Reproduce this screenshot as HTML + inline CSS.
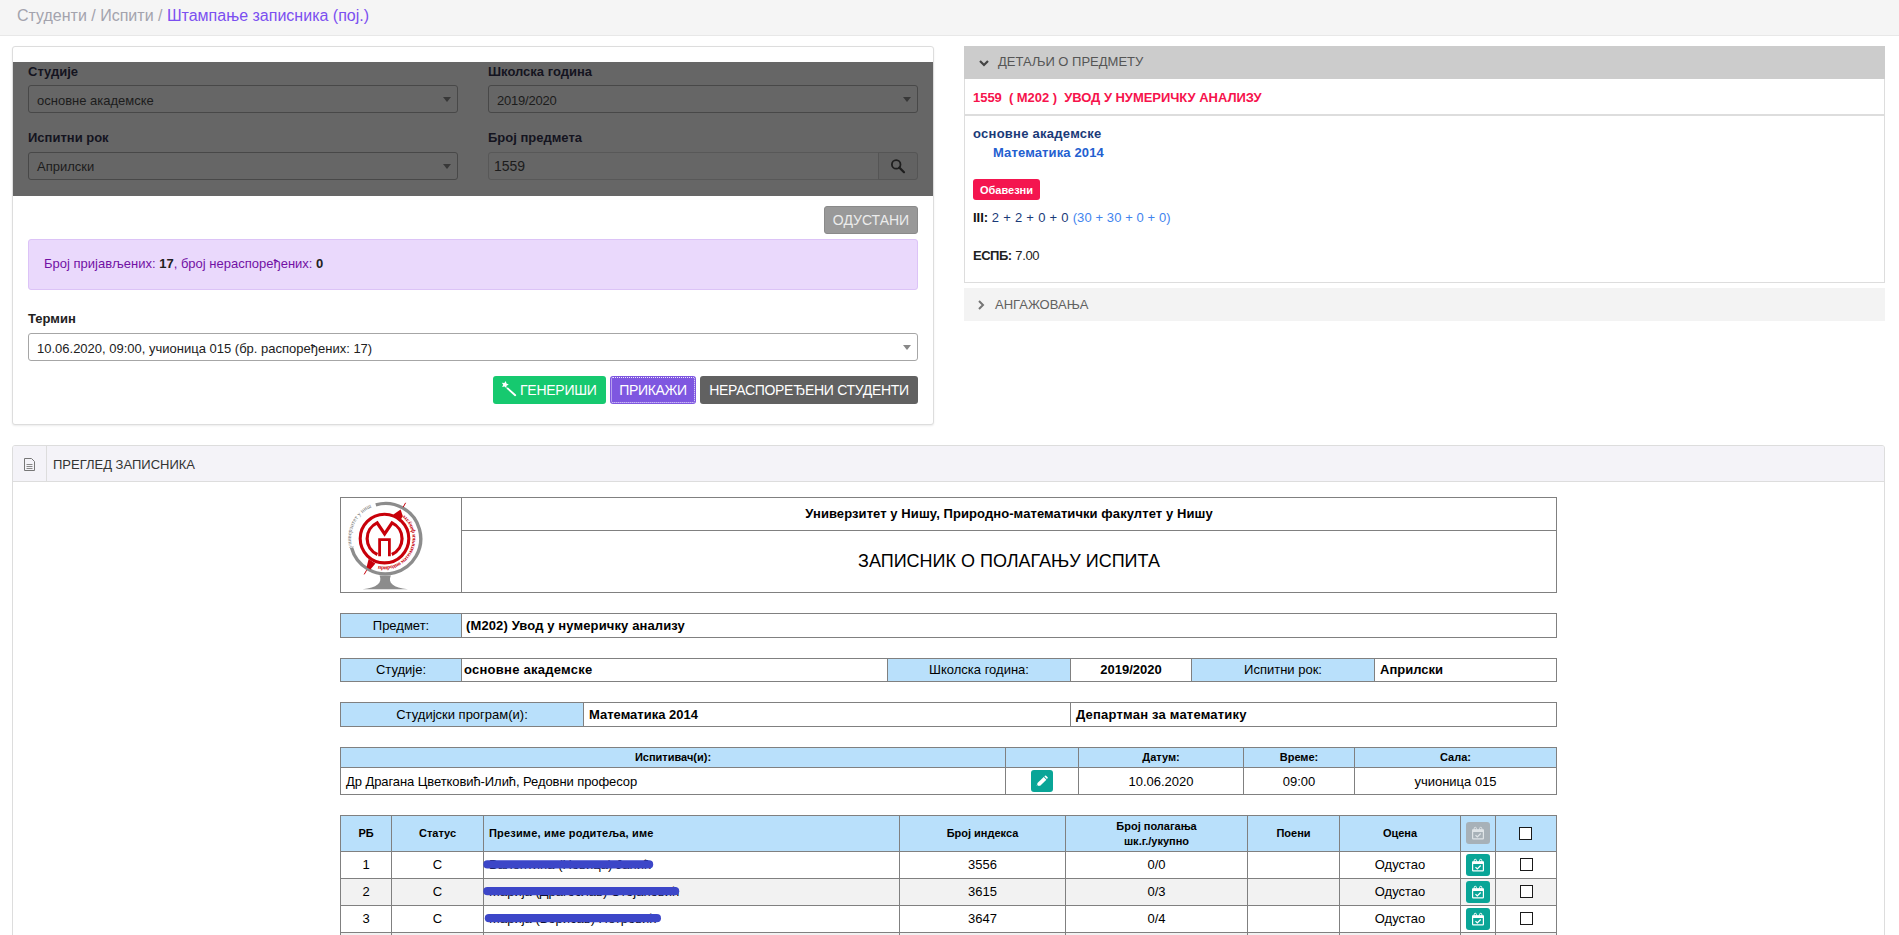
<!DOCTYPE html>
<html lang="sr">
<head>
<meta charset="utf-8">
<title>Штампање записника</title>
<style>
*{box-sizing:border-box;margin:0;padding:0}
html,body{width:1899px;height:935px;overflow:hidden;background:#fff}
body{font-family:"Liberation Sans",sans-serif;font-size:13px;color:#212121;position:relative}
.abs{position:absolute}
#crumb{left:0;top:0;width:1899px;height:36px;background:#f5f5f5;border-bottom:1px solid #e8e8e8}
#crumb span{position:absolute;left:17px;top:7px;font-size:16px;color:#a3a3ad;white-space:nowrap}
#crumb span b{font-weight:normal;color:#7b4ff0}
/* left panel */
#lp{left:12px;top:46px;width:922px;height:379px;border:1px solid #ddd;border-radius:3px;background:#fff;box-shadow:0 1px 2px rgba(0,0,0,.08)}
#ov{left:13px;top:62px;width:920px;height:134px;background:#666}
.lbl{font-weight:bold;font-size:13px;color:#212121;white-space:nowrap}
.sel{height:28px;border:1px solid #a6a6a6;border-radius:3px;background:#fff;font-size:13px;color:#212121;padding:7px 0 0 8px;white-space:nowrap}
.sel i{position:absolute;right:6px;top:11px;width:0;height:0;border-left:4px solid transparent;border-right:4px solid transparent;border-top:5px solid #888}
.dk{background:#666;border-color:#484848;color:#1c1c1c}
.dk i{border-top-color:#383838}
.btn{height:28px;border-radius:3px;color:#fff;font-size:14px;text-align:center;padding-top:6px;white-space:nowrap}

#bp{left:12px;top:445px;width:1873px;height:520px;border:1px solid #ddd;border-radius:3px;background:#fff}
#bph{left:13px;top:446px;width:1871px;height:36px;background:#f4f3f8;border-bottom:1px solid #ddd;border-radius:2px 2px 0 0}
table.t{position:absolute;left:340px;width:1217px;border-collapse:collapse;table-layout:fixed;font-size:13px;color:#000}
table.t td{border:1px solid #808080;padding:0;white-space:nowrap;overflow:hidden;vertical-align:middle}
td.h{background:#b9e0fb;text-align:center}
td.b{font-weight:bold}
td.c{text-align:center}
tr.alt td{background:#f2f2f2}
.ib{display:block;margin:0 auto;width:24px;height:22px;border-radius:3px;background:#09a597}
.cb{display:block;margin:0 auto;width:13px;height:13px;border:1px solid #1a1a1a;background:#fff;border-radius:0}
table.t td.u,table.t tr.u td{padding-bottom:1px}
</style>
</head>
<body>
<div id="crumb" class="abs"><span>Студенти / Испити / <b>Штампање записника (пој.)</b></span></div>

<div id="lp" class="abs"></div>
<div id="ov" class="abs"></div>
<div class="abs lbl" style="left:28px;top:64px;color:#14141f">Студије</div>
<div class="abs lbl" style="left:488px;top:64px;color:#14141f">Школска година</div>
<div class="abs sel dk" style="left:28px;top:85px;width:430px">основне академске<i></i></div>
<div class="abs sel dk" style="left:488px;top:85px;width:430px;letter-spacing:-.2px">2019/2020<i></i></div>
<div class="abs lbl" style="left:28px;top:130px;color:#14141f">Испитни рок</div>
<div class="abs lbl" style="left:488px;top:130px;color:#14141f">Број предмета</div>
<div class="abs sel dk" style="left:28px;top:152px;width:430px;padding-top:6px">Априлски<i></i></div>
<div class="abs sel dk" style="left:488px;top:152px;width:391px;border-radius:3px 0 0 3px;padding-left:5px;font-size:14px;padding-top:5px;border-color:#585858">1559</div>
<div class="abs" id="sbtn" style="left:878px;top:152px;width:40px;height:28px;background:#626262;border:1px solid #555;border-radius:0 3px 3px 0"><svg width="38" height="26" viewBox="0 0 38 26" style="display:block"><circle cx="17.2" cy="11.4" r="4.3" fill="none" stroke="#1e1e1e" stroke-width="1.8"/><path d="M20.4 14.6 L25 19.2" stroke="#1e1e1e" stroke-width="2.2" stroke-linecap="round"/></svg></div>

<div class="abs btn" style="left:824px;top:206px;width:94px;background:#999;border:1px solid #8a8a8a;color:#ececec;padding-top:5px">ОДУСТАНИ</div>
<div class="abs" style="left:28px;top:239px;width:890px;height:51px;background:#ead9fc;border:1px solid #dcc3f7;border-radius:3px"></div>
<div class="abs" style="left:44px;top:256px;font-size:13px;color:#7211a4;white-space:nowrap">Број пријављених: <b style="color:#212121">17</b>, број нераспоређених: <b style="color:#212121">0</b></div>
<div class="abs lbl" style="left:28px;top:311px">Термин</div>
<div class="abs sel" style="left:28px;top:333px;width:890px">10.06.2020, 09:00, учионица 015 (бр. распоређених: 17)<i></i></div>
<div class="abs btn" style="left:493px;top:376px;width:113px;background:#16c96f;text-align:left;padding-left:27px;letter-spacing:-.25px">ГЕНЕРИШИ</div>
<div class="abs btn" style="left:610px;top:376px;width:86px;background:#7e57e0;outline:1px dotted #f0eaff;outline-offset:-2px;letter-spacing:-.35px;padding-top:6px">ПРИКАЖИ</div>
<div class="abs btn" style="left:700px;top:376px;width:218px;background:#616161;letter-spacing:-.3px">НЕРАСПОРЕЂЕНИ СТУДЕНТИ</div>
<div class="abs" style="left:964px;top:46px;width:921px;height:34px;background:#ccc"></div>
<svg class="abs" style="left:978px;top:58px" width="12" height="10" viewBox="0 0 12 10"><path d="M2 3 L6 7 L10 3" fill="none" stroke="#444" stroke-width="2.2"/></svg>
<div class="abs" style="left:998px;top:54px;font-size:13px;color:#555;white-space:nowrap">ДЕТАЉИ О ПРЕДМЕТУ</div>
<div class="abs" style="left:964px;top:79px;width:921px;height:204px;border:1px solid #ddd;border-top:none;background:#fff"></div>
<div class="abs" style="left:965px;top:114px;width:919px;height:2px;background:#ddd"></div>
<div class="abs" style="left:973px;top:90px;font-size:13px;font-weight:bold;color:#f6134c;white-space:pre;letter-spacing:-.04px">1559  ( М202 )  УВОД У НУМЕРИЧКУ АНАЛИЗУ</div>
<div class="abs" style="left:973px;top:126px;font-size:13px;font-weight:bold;color:#1a3a78;white-space:nowrap;letter-spacing:.26px">основне академске</div>
<div class="abs" style="left:993px;top:145px;font-size:13px;font-weight:bold;color:#2360d0;white-space:nowrap;letter-spacing:.13px">Математика 2014</div>
<div class="abs" style="left:973px;top:179px;width:67px;height:21px;background:#f4154f;border-radius:3px;color:#fff;font-size:11px;font-weight:bold;text-align:center;padding-top:5px">Обавезни</div>
<div class="abs" style="left:973px;top:210px;font-size:13px;color:#1a3a78;white-space:nowrap"><b style="color:#111">III:</b> <span style="letter-spacing:.28px">2 + 2 + 0 + 0 </span><span style="color:#3f84ee;letter-spacing:.09px;margin-left:0px">(30 + 30 + 0 + 0)</span></div>
<div class="abs" style="left:973px;top:248px;font-size:13px;color:#212121;white-space:nowrap"><b style="letter-spacing:-.5px">ЕСПБ:</b> <span style="letter-spacing:-.3px">7.00</span></div>
<div class="abs" style="left:964px;top:288px;width:921px;height:33px;background:#f3f3f3"></div>
<svg class="abs" style="left:976px;top:299px" width="10" height="12" viewBox="0 0 10 12"><path d="M3 2 L7 6 L3 10" fill="none" stroke="#757575" stroke-width="2"/></svg>
<div class="abs" style="left:995px;top:297px;font-size:13px;color:#616161;white-space:nowrap">АНГАЖОВАЊА</div>
<svg class="abs" style="left:500px;top:381px" width="18" height="16" viewBox="0 0 18 16"><path d="M5.9 0.0 L6.4 2.6 L8.8 3.5 L6.5 4.7 L6.4 7.2 L4.6 5.4 L2.1 6.1 L3.2 3.8 L1.8 1.7 L4.3 2.0 Z" fill="#fff"/><path d="M7.6 7.4 L15.2 14.2" stroke="#fff" stroke-width="1.9" stroke-linecap="round"/></svg>
<!--RIGHT-->
<div id="bp" class="abs"></div>
<div id="bph" class="abs"></div>
<div class="abs" style="left:46px;top:446px;width:1px;height:36px;background:#ddd"></div>
<svg class="abs" style="left:23px;top:457px" width="13" height="15" viewBox="0 0 13 15"><path d="M1.5 1.5 H8.5 L11.5 4.5 V13.5 H1.5 Z" fill="none" stroke="#777" stroke-width="1"/><path d="M3.5 7.5 H9.5 M3.5 9.5 H9.5 M3.5 11.5 H9.5" stroke="#888" stroke-width="1"/></svg>
<div class="abs" style="left:53px;top:457px;font-size:13px;color:#333;white-space:nowrap">ПРЕГЛЕД ЗАПИСНИКА</div>

<table class="t" style="top:497px"><colgroup><col style="width:121px"><col></colgroup>
<tr style="height:33px"><td rowspan="2" id="logo"></td><td class="c b u" style="letter-spacing:.08px">Универзитет у Нишу, Природно-математички факултет у Нишу</td></tr>
<tr style="height:62px"><td class="c" style="font-size:18px">ЗАПИСНИК О ПОЛАГАЊУ ИСПИТА</td></tr>
</table>

<table class="t" style="top:613px"><colgroup><col style="width:121px"><col></colgroup>
<tr style="height:24px"><td class="h">Предмет:</td><td class="b" style="padding-left:4px;letter-spacing:.12px">(М202) Увод у нумеричку анализу</td></tr>
</table>

<table class="t" style="top:658px"><colgroup><col style="width:121px"><col style="width:426px"><col style="width:183px"><col style="width:121px"><col style="width:183px"><col></colgroup>
<tr class="u" style="height:23px"><td class="h">Студије:</td><td class="b" style="padding-left:2px;letter-spacing:.25px">основне академске</td><td class="h">Школска година:</td><td class="c b">2019/2020</td><td class="h">Испитни рок:</td><td class="b" style="padding-left:5px">Априлски</td></tr>
</table>

<table class="t" style="top:702px"><colgroup><col style="width:243px"><col style="width:487px"><col></colgroup>
<tr style="height:24px"><td class="h">Студијски програм(и):</td><td class="b" style="padding-left:5px">Математика 2014</td><td class="b" style="padding-left:5px;letter-spacing:.2px">Департман за математику</td></tr>
</table>

<table class="t" style="top:747px"><colgroup><col style="width:665px"><col style="width:73px"><col style="width:165px"><col style="width:111px"><col></colgroup>
<tr class="u" style="height:20px;font-size:11px"><td class="h b">Испитивач(и):</td><td class="h"></td><td class="h b">Датум:</td><td class="h b">Време:</td><td class="h b">Сала:</td></tr>
<tr style="height:27px"><td style="padding-left:5px;letter-spacing:-.08px">Др Драгана Цветковић-Илић, Редовни професор</td><td><span class="ib" style="width:22px"><svg width="22" height="22" viewBox="0 0 22 22" style="display:block"><path d="M5.7 16.1 L6.5 13.1 L12.7 7 L15.4 9.7 L9.2 15.8 Z" fill="#fff"/><path d="M13.3 6.3 L14 5.7 Q14.5 5.2 15.1 5.7 L16.6 7.2 Q17.1 7.7 16.6 8.3 L15.9 8.9 Z" fill="#fff"/><path d="M5.9 15.9 L6.3 14.5 L7.4 15.6 Z" fill="#09a597"/></svg></span></td><td class="c">10.06.2020</td><td class="c">09:00</td><td class="c">учионица 015</td></tr>
</table>

<table class="t" style="top:815px"><colgroup><col style="width:51px"><col style="width:92px"><col style="width:416px"><col style="width:166px"><col style="width:182px"><col style="width:92px"><col style="width:121px"><col style="width:35px"><col></colgroup>
<tr class="u" style="height:36px;font-size:11px"><td class="h b">РБ</td><td class="h b">Статус</td><td class="h b" style="text-align:left;padding-left:5px;letter-spacing:.18px">Презиме, име родитеља, име</td><td class="h b">Број индекса</td><td class="h b" style="line-height:15px;padding-top:1px">Број полагања<br>шк.г./укупно</td><td class="h b">Поени</td><td class="h b">Оцена</td><td class="h"><span class="ib" style="background:#a7b1b8"><svg width="24" height="22" viewBox="0 0 24 22" style="display:block"><rect x="6.6" y="7.9" width="10.8" height="8.9" rx="0.6" fill="none" stroke="#dfe4e7" stroke-width="1.2"/><path d="M6.3 7.6 H17.7 V10 H6.3 Z" fill="#dfe4e7"/><rect x="8.2" y="5.3" width="2.2" height="3.2" rx="1.1" fill="none" stroke="#dfe4e7" stroke-width="1"/><rect x="13.6" y="5.3" width="2.2" height="3.2" rx="1.1" fill="none" stroke="#dfe4e7" stroke-width="1"/><path d="M9.5 13.1 L11.3 14.9 L14.7 11.5" fill="none" stroke="#dfe4e7" stroke-width="1.3"/></svg></span></td><td class="h"><span class="cb" style="position:relative;left:-1px"></span></td></tr>
<tr class="u" style="height:27px"><td class="c">1</td><td class="c">С</td><td></td><td class="c">3556</td><td class="c">0/0</td><td></td><td class="c">Одустао</td><td><span class="ib"><svg width="24" height="22" viewBox="0 0 24 22" style="display:block"><rect x="6.6" y="7.9" width="10.8" height="8.9" rx="0.6" fill="none" stroke="#fff" stroke-width="1.2"/><path d="M6.3 7.6 H17.7 V10 H6.3 Z" fill="#fff"/><rect x="8.2" y="5.3" width="2.2" height="3.2" rx="1.1" fill="none" stroke="#fff" stroke-width="1"/><rect x="13.6" y="5.3" width="2.2" height="3.2" rx="1.1" fill="none" stroke="#fff" stroke-width="1"/><path d="M9.5 13.1 L11.3 14.9 L14.7 11.5" fill="none" stroke="#fff" stroke-width="1.3"/></svg></span></td><td><span class="cb"></span></td></tr>
<tr style="height:27px" class="alt u"><td class="c">2</td><td class="c">С</td><td></td><td class="c">3615</td><td class="c">0/3</td><td></td><td class="c">Одустао</td><td><span class="ib"><svg width="24" height="22" viewBox="0 0 24 22" style="display:block"><rect x="6.6" y="7.9" width="10.8" height="8.9" rx="0.6" fill="none" stroke="#fff" stroke-width="1.2"/><path d="M6.3 7.6 H17.7 V10 H6.3 Z" fill="#fff"/><rect x="8.2" y="5.3" width="2.2" height="3.2" rx="1.1" fill="none" stroke="#fff" stroke-width="1"/><rect x="13.6" y="5.3" width="2.2" height="3.2" rx="1.1" fill="none" stroke="#fff" stroke-width="1"/><path d="M9.5 13.1 L11.3 14.9 L14.7 11.5" fill="none" stroke="#fff" stroke-width="1.3"/></svg></span></td><td><span class="cb"></span></td></tr>
<tr class="u" style="height:27px"><td class="c">3</td><td class="c">С</td><td></td><td class="c">3647</td><td class="c">0/4</td><td></td><td class="c">Одустао</td><td><span class="ib"><svg width="24" height="22" viewBox="0 0 24 22" style="display:block"><rect x="6.6" y="7.9" width="10.8" height="8.9" rx="0.6" fill="none" stroke="#fff" stroke-width="1.2"/><path d="M6.3 7.6 H17.7 V10 H6.3 Z" fill="#fff"/><rect x="8.2" y="5.3" width="2.2" height="3.2" rx="1.1" fill="none" stroke="#fff" stroke-width="1"/><rect x="13.6" y="5.3" width="2.2" height="3.2" rx="1.1" fill="none" stroke="#fff" stroke-width="1"/><path d="M9.5 13.1 L11.3 14.9 L14.7 11.5" fill="none" stroke="#fff" stroke-width="1.3"/></svg></span></td><td><span class="cb"></span></td></tr>
<tr style="height:27px" class="alt u"><td class="c">4</td><td class="c">С</td><td></td><td class="c">3650</td><td class="c">0/1</td><td></td><td class="c">Одустао</td><td><span class="ib"><svg width="24" height="22" viewBox="0 0 24 22" style="display:block"><rect x="6.6" y="7.9" width="10.8" height="8.9" rx="0.6" fill="none" stroke="#fff" stroke-width="1.2"/><path d="M6.3 7.6 H17.7 V10 H6.3 Z" fill="#fff"/><rect x="8.2" y="5.3" width="2.2" height="3.2" rx="1.1" fill="none" stroke="#fff" stroke-width="1"/><rect x="13.6" y="5.3" width="2.2" height="3.2" rx="1.1" fill="none" stroke="#fff" stroke-width="1"/><path d="M9.5 13.1 L11.3 14.9 L14.7 11.5" fill="none" stroke="#fff" stroke-width="1.3"/></svg></span></td><td><span class="cb"></span></td></tr>
</table>
<svg class="abs" style="left:341px;top:498px" width="120" height="94" viewBox="341 498 120 94">
<defs>
<path id="arcT" d="M 352.2 547.5 A 34.3 34.3 0 0 1 372.9 506.7"/>
<path id="arcR" d="M 377.8 568.4 A 30.6 30.6 0 0 0 404.6 515.4"/>
</defs>
<path d="M 375.8 504.8 A 35.2 35.2 0 1 1 351.5 547.6" fill="none" stroke="#8c8c8c" stroke-width="3.4"/>
<path d="M 379.6 575.5 C 382.6 583 377 587.6 362.5 589.2 L 408 589.2 C 393 587.6 387.6 583 390.8 575.5 Z" fill="#8c8c8c"/>
<circle cx="384.5" cy="538.6" r="24.3" fill="none" stroke="#c8000a" stroke-width="3.1"/>
<path d="M 377.4 554.5 A 17.4 17.4 0 0 1 377.1 522.9 L 384.6 534 L 392.1 522.9 A 17.4 17.4 0 0 1 391.8 554.5" fill="none" stroke="#c8000a" stroke-width="3.2" stroke-linejoin="miter"/>
<path d="M 379.6 556.2 V 539.6 H 389.4 V 556.2" fill="none" stroke="#c8000a" stroke-width="2.8"/>
<path d="M 405.6 502.8 L 403.2 507.2 M 366.6 570.2 L 364.2 574.4" stroke="#c8000a" stroke-width="1"/>
<path d="M 400.6 509.4 L 402.8 516 L 399.8 521.4 L 393.4 514.6 Z" fill="#c8000a"/>
<path d="M 368.6 559 L 375.4 563.6 L 370.4 569.4 L 366.6 567.2 Z" fill="#c8000a"/>
<text font-family="Liberation Serif, serif" font-size="6" fill="#6a6a6a"><textPath href="#arcT">универзитет у нишу</textPath></text>
<text font-family="Liberation Serif, serif" font-size="5.7" font-weight="bold" fill="#c8000a" letter-spacing="-0.05"><textPath href="#arcR">природно математички факултет</textPath></text>
</svg>
<div class="abs" style="left:489px;top:857px;font-size:13px;color:#000;white-space:nowrap;line-height:15px">Валентина (Новица) Јанић</div>
<div class="abs" style="left:489px;top:884px;font-size:13px;color:#000;white-space:nowrap;line-height:15px">Марија (Драгослав) Стојановић</div>
<div class="abs" style="left:489px;top:911px;font-size:13px;color:#000;white-space:nowrap;line-height:15px">Марија (Борисав) Петровић</div>
<svg class="abs" style="left:475px;top:850px" width="220" height="85" viewBox="475 850 220 85"><path d="M487.4 864.4 H649.1" stroke="#3c46c8" stroke-width="8.2" stroke-linecap="round"/><path d="M487.4 891.2 H675.1" stroke="#3c46c8" stroke-width="8.2" stroke-linecap="round"/><path d="M488.9 918.2 H656.9" stroke="#3c46c8" stroke-width="8.2" stroke-linecap="round"/></svg>
<!--BOTTOM-->
</body>
</html>
